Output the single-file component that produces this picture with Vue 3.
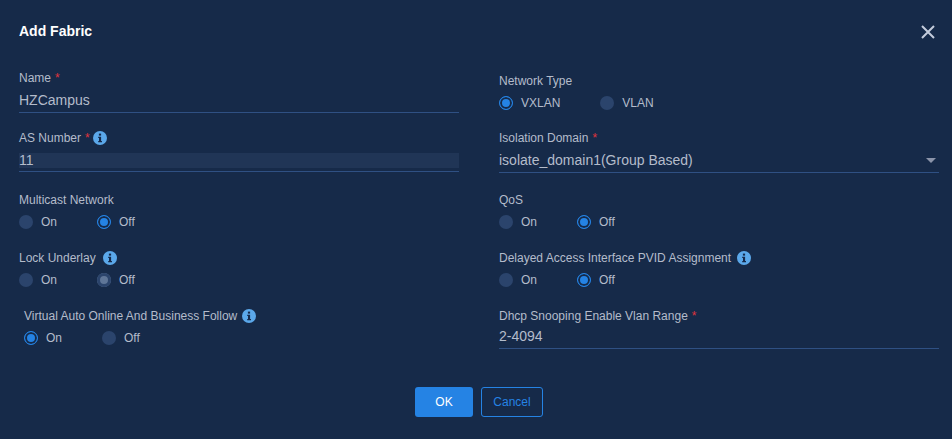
<script setup>
const left = [
  { label: 'Name', req: true, type: 'input', value: 'HZCampus' },
  { label: 'AS Number', req: true, info: 3, type: 'input', value: '11', filled: true },
  { label: 'Multicast Network', type: 'radio', options: ['On', 'Off'], sel: 1 },
  { label: 'Lock Underlay', info: 7, type: 'radio', options: ['On', 'Off'], sel: 1, disabled: true },
  { label: 'Virtual Auto Online And Business Follow', info: 5, inset: true, type: 'radio', options: ['On', 'Off'], sel: 0 }
]
const right = [
  { label: 'Network Type', type: 'radio', options: ['VXLAN', 'VLAN'], sel: 0, lower: true },
  { label: 'Isolation Domain', req: true, type: 'select', value: 'isolate_domain1(Group Based)' },
  { label: 'QoS', type: 'radio', options: ['On', 'Off'], sel: 1 },
  { label: 'Delayed Access Interface PVID Assignment', info: 6, type: 'radio', options: ['On', 'Off'], sel: 1 },
  { label: 'Dhcp Snooping Enable Vlan Range', req: true, type: 'input', value: '2-4094', short: true }
]
const columns = [left, right]
</script>

<template>
  <div class="dialog">
    <header class="head">
      <h1 class="title">Add Fabric</h1>
      <button class="close" aria-label="Close">
        <svg width="14" height="14" viewBox="0 0 14 14"><path d="M1 1 13 13M13 1 1 13" stroke="#c3ccdc" stroke-width="2" fill="none" /></svg>
      </button>
    </header>
    <div class="form">
      <div v-for="(col, c) in columns" :key="c" class="col">
        <div v-for="f in col" :key="f.label" class="field" :class="{ inset: f.inset, lower: f.lower }">
          <div class="label">
            <span>{{ f.label }}</span>
            <span v-if="f.req" class="req">*</span>
            <svg v-if="f.info" class="info" :style="{ marginLeft: f.info + 'px' }" width="14" height="14" viewBox="0 0 14 14">
              <circle cx="7" cy="7" r="7" fill="#5ba8ea" />
              <rect x="5.9" y="2.6" width="2.2" height="2" fill="#16294a" />
              <path d="M5.2 5.8H8.1V10H9V11.2H5.2V10H6V7H5.2Z" fill="#16294a" />
            </svg>
          </div>
          <div v-if="f.type === 'radio'" class="radios">
            <label v-for="(o, i) in f.options" :key="o" class="radio">
              <span class="dot" :class="{ on: i === f.sel && !f.disabled, off: i === f.sel && f.disabled }"></span>
              <span>{{ o }}</span>
            </label>
          </div>
          <div v-else class="control" :class="{ short: f.short, slim: f.filled }">
            <div class="value" :class="{ filled: f.filled }">{{ f.value }}</div>
            <span v-if="f.type === 'select'" class="caret"></span>
          </div>
        </div>
      </div>
    </div>
    <footer class="foot">
      <button class="btn ok">OK</button>
      <button class="btn cancel">Cancel</button>
    </footer>
  </div>
</template>

<style>
html, body { margin: 0; background: #162a49; }
</style>

<style scoped>
.dialog {
  width: 952px;
  height: 439px;
  box-sizing: border-box;
  background: #162a49;
  font-family: "Liberation Sans", Arial, sans-serif;
  color: #b4bccb;
  overflow: hidden;
}
.head {
  height: 69px;
  box-sizing: border-box;
  padding: 23px 17px 0 19px;
  display: flex;
  justify-content: space-between;
  align-items: flex-start;
}
.title {
  margin: 0;
  font-size: 14px;
  line-height: 16px;
  font-weight: 700;
  color: #fff;
}
.close {
  margin-top: 2px;
  padding: 0;
  border: 0;
  background: none;
  display: block;
  line-height: 0;
}
.form {
  display: grid;
  grid-template-columns: 440px 440px;
  column-gap: 40px;
  padding-left: 19px;
}
.field { height: 58px; box-sizing: border-box; }
.field:nth-child(1) { height: 60px; }
.field:nth-child(2) { height: 62px; }
.field.inset { padding-left: 5px; }
.field.lower { padding-top: 3px; }
.label {
  height: 18px;
  font-size: 12px;
  line-height: 18px;
  display: flex;
  align-items: center;
}
.req { color: #e0343c; margin-left: 4px; }
.info { flex: none; }
.control { display: flow-root; position: relative; border-bottom: 1px solid #2f5083; height: 25px; }
.control.slim { height: 24px; }
.control.short { height: 23px; }
.value {
  font-size: 14px;
  line-height: 15px;
  padding-top: 6px;
}
.control.short .value { padding-top: 4px; }
.value.filled {
  padding-top: 0;
  margin-top: 6px;
  background: #203556;
}
.caret {
  position: absolute;
  right: 3px;
  top: 11px;
  border: 5px solid transparent;
  border-top: 5px solid #8b94aa;
  border-bottom: 0;
}
.radios { display: flex; gap: 40px; padding-top: 3px; height: 20px; align-items: center; }
.radio { display: flex; align-items: center; gap: 8px; font-size: 12px; }
.dot {
  width: 14px;
  height: 14px;
  border-radius: 50%;
  background: #2b446c;
  box-sizing: border-box;
  flex: none;
}
.dot.on {
  background: #2583e4;
  border: 1px solid #2583e4;
  box-shadow: inset 0 0 0 2px #162a49;
}
.dot.off {
  background: #5f7698;
  box-shadow: inset 0 0 0 3px #2b446c;
}
.foot {
  display: flex;
  justify-content: center;
  gap: 8px;
  padding: 22px 0 0 6px;
}
.btn {
  height: 30px;
  border-radius: 3px;
  font: 12px "Liberation Sans", Arial, sans-serif;
  padding: 0;
  box-sizing: border-box;
}
.ok { background: #2583e4; border: 0; color: #fff; width: 58px; }
.cancel { background: transparent; border: 1px solid #2583e4; color: #2583e4; width: 62px; }
</style>
